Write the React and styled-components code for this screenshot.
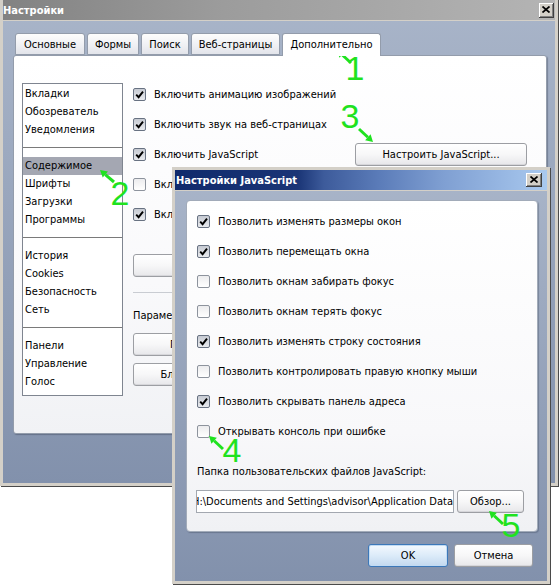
import React from "react";
import styled, { createGlobalStyle } from "styled-components";

const UI_FONT = `"DejaVu Sans Condensed", "Liberation Sans", Arial, sans-serif`;

const GlobalStyle = createGlobalStyle`
  html, body { margin: 0; padding: 0; background: #ffffff; }
  body { font-family: ${UI_FONT}; font-size: 11px; color: #000; }
  * { box-sizing: border-box; }
`;

const Desktop = styled.div`
  position: relative;
  width: 560px;
  height: 585px;
  overflow: hidden;
  background: #fff;
`;

const Window = styled.div`
  position: absolute;
  left: ${(p) => p.$x}px;
  top: ${(p) => p.$y}px;
  width: ${(p) => p.$w}px;
  height: ${(p) => p.$h}px;
  display: flex;
  flex-direction: column;
  border: 3px solid #d4d0c8;
  box-shadow: 1px 1px 0 #4a4a4a;
  background: linear-gradient(#a9b5c9, #8291ac);
`;

const TitleBar = styled.div`
  height: 21px;
  flex: none;
  display: flex;
  align-items: center;
  justify-content: space-between;
  padding: 0 ${(p) => p.$padR}px 0 ${(p) => p.$padL}px;
  border-bottom: 1px solid #d4d0c8;
  background: ${(p) =>
    p.$active
      ? "linear-gradient(90deg, #102a6c 0%, #1a3576 33%, #3d5b9b 40%, #5b7cb9 55%, #7f9fd2 72%, #a9c9ef 100%)"
      : "linear-gradient(90deg, #828282 0%, #9c9c9c 40%, #b4b4b4 100%)"};
`;

const TitleText = styled.span`
  color: #fff;
  font-weight: bold;
  font-size: 11px;
  white-space: nowrap;
`;

const CloseButton = styled.div`
  width: ${(p) => p.$w}px;
  height: ${(p) => p.$h}px;
  flex: none;
  background: #d4d0c8;
  box-shadow: inset -1px -1px 0 #404040, inset 1px 1px 0 #ffffff,
    inset -2px -2px 0 #808080;
  display: flex;
  align-items: center;
  justify-content: center;
  padding: 0 1px 1px 0;
`;

const WindowBody = styled.div`
  flex: 1;
  display: flex;
  flex-direction: column;
  padding: ${(p) => p.$pad};
`;

/* ---------- tabs ---------- */

const TabStrip = styled.div`
  display: flex;
  gap: 2px;
  padding-left: 2px;
  height: 22px;
  margin-top: 12px;
  position: relative;
  z-index: 1;
`;

const Tab = styled.div`
  width: ${(p) => p.$w}px;
  height: ${(p) => (p.$active ? 23 : 22)}px;
  border: 1px solid #939cab;
  border-bottom: ${(p) => (p.$active ? "none" : "1px solid #939cab")};
  border-radius: 3px 3px 0 0;
  background: ${(p) =>
    p.$active ? "#ffffff" : "linear-gradient(#fdfdfd, #eeeff3 60%, #e2e4ea)"};
  display: flex;
  align-items: center;
  justify-content: center;
  white-space: nowrap;
  padding-bottom: ${(p) => (p.$active ? 1 : 0)}px;
`;

const TabPanel = styled.div`
  width: 534px;
  height: 379px;
  border: 1px solid #939cab;
  border-radius: 3px;
  background: linear-gradient(#ffffff, #f9f9fb 60%, #f1f2f5);
  box-shadow: 1px 1px 1px rgba(40, 50, 70, 0.35);
  display: flex;
  align-items: flex-start;
  padding: 27px 19px 0 8px;
`;

/* ---------- category list ---------- */

const CategoryList = styled.div`
  width: 101px;
  height: 313px;
  flex: none;
  border: 1px solid #7f8590;
  background: #ffffff;
  padding: 1px 0;
  display: flex;
  flex-direction: column;
`;

const CategoryItem = styled.div`
  height: 18px;
  line-height: 18px;
  padding-left: 2px;
  white-space: nowrap;
  background: ${(p) => (p.$selected ? "#a4a7b2" : "transparent")};
`;

const ListSeparator = styled.div`
  height: 1px;
  background: #7a7a7a;
  margin: 8px 0 9px;
`;

/* ---------- options ---------- */

const OptionsColumn = styled.div`
  flex: 1;
  margin-left: 10px;
  margin-top: -4px;
  display: flex;
  flex-direction: column;
  align-items: stretch;
`;

const OptionRow = styled.div`
  height: 30px;
  flex: none;
  display: flex;
  align-items: center;
  gap: 8px;
  white-space: nowrap;
`;

const OptionLabel = styled.span`
  flex: 1;
`;

const Box = styled.span`
  width: 13px;
  height: 13px;
  flex: none;
  border: 1px solid ${(p) => (p.$checked ? "#687282" : "#8d939d")};
  border-radius: 2px;
  background: ${(p) =>
    p.$checked
      ? "linear-gradient(#c6cad2, #e8eaee)"
      : "linear-gradient(#ececee, #ffffff)"};
  display: flex;
  align-items: center;
  justify-content: center;
`;

const Button = styled.button`
  font: inherit;
  color: #000;
  flex: none;
  height: 23px;
  width: ${(p) => p.$w}px;
  padding: 0;
  border: 1px solid ${(p) => (p.$primary ? "#3c78b9" : "#9c9ea3")};
  border-radius: 3px;
  white-space: nowrap;
  overflow: hidden;
  background: ${(p) =>
    p.$primary
      ? "linear-gradient(#f4f9fe, #dcebf9 50%, #c3d9ef)"
      : "linear-gradient(#ffffff, #f7f7f8 50%, #e7e7ea)"};
  box-shadow: ${(p) =>
    p.$primary ? "inset 0 0 0 1px #c2dbf3" : "inset 0 -1px 0 #d6d6da"};
`;

const BlockButton = styled(Button)`
  margin-top: ${(p) => p.$mt}px;
`;

const Divider = styled.div`
  height: 1px;
  background: #c9ccd2;
  margin-top: ${(p) => p.$mt}px;
`;

const SectionLabel = styled.div`
  height: 16px;
  line-height: 16px;
  margin-top: ${(p) => p.$mt}px;
  white-space: nowrap;
`;

/* ---------- dialog ---------- */

const DialogPanel = styled.div`
  width: 352px;
  height: 332px;
  flex: none;
  border: 1px solid #a2abb9;
  border-radius: 4px;
  background: linear-gradient(#ffffff, #f8f8fa 70%, #f0f1f4);
  box-shadow: 1px 1px 1px rgba(40, 50, 70, 0.3);
  display: flex;
  flex-direction: column;
  padding: 5px 0 0 10px;
`;

const PathRow = styled.div`
  display: flex;
  margin-top: 10px;
  margin-left: -1px;
  gap: 3px;
`;

const PathField = styled.div`
  width: 258px;
  height: 23px;
  border: 1px solid #a3a8b0;
  background: #ffffff;
  display: flex;
  align-items: center;
  justify-content: flex-end;
  overflow: hidden;
  white-space: nowrap;
  padding: 0;
`;

const ButtonRow = styled.div`
  display: flex;
  justify-content: flex-end;
  gap: 6px;
  margin-top: 12px;
  padding-right: 4px;
`;

const Annotations = styled.svg`
  position: absolute;
  left: 0;
  top: 0;
  pointer-events: none;
`;

/* ---------- helpers ---------- */

const CheckMark = () => (
  <svg width="9" height="9" viewBox="0 0 9 9">
    <path d="M1.2 4.6 L3.6 7.2 L8 1.6" fill="none" stroke="#000" strokeWidth="1.9" />
  </svg>
);

const Check = ({ checked }) => <Box $checked={checked}>{checked && <CheckMark />}</Box>;

const CloseGlyph = () => (
  <svg width="8" height="7" viewBox="0 0 8 7">
    <path d="M0.5 0.5 L7.5 6.5 M7.5 0.5 L0.5 6.5" stroke="#000" strokeWidth="1.7" />
  </svg>
);

const Option = ({ checked, children, extra }) => (
  <OptionRow>
    <Check checked={checked} />
    <OptionLabel>{children}</OptionLabel>
    {extra}
  </OptionRow>
);

const GREEN = "#1fe21f";

const Arrow = ({ from, to }) => {
  const [x1, y1] = from;
  const [x2, y2] = to;
  const dx = x2 - x1;
  const dy = y2 - y1;
  const len = Math.hypot(dx, dy);
  const ux = dx / len;
  const uy = dy / len;
  const bx = x2 - ux * 7;
  const by = y2 - uy * 7;
  const nx = -uy * 4;
  const ny = ux * 4;
  return (
    <g>
      <line x1={x1} y1={y1} x2={bx} y2={by} stroke={GREEN} strokeWidth="3" />
      <polygon
        points={`${x2},${y2} ${bx + nx},${by + ny} ${bx - nx},${by - ny}`}
        fill={GREEN}
      />
    </g>
  );
};

const marks = [
  { n: "1", x: 355, y: 80, from: [351, 63], to: [337, 50] },
  { n: "2", x: 120, y: 205, from: [114, 182], to: [100, 170] },
  { n: "3", x: 350, y: 128, from: [359, 129], to: [373, 142] },
  { n: "4", x: 232, y: 462, from: [223, 449], to: [209, 436] },
  { n: "5", x: 511, y: 537, from: [503, 524], to: [489, 511] },
];

const categories = [
  ["Вкладки", "Обозреватель", "Уведомления"],
  ["Содержимое", "Шрифты", "Загрузки", "Программы"],
  ["История", "Cookies", "Безопасность", "Сеть"],
  ["Панели", "Управление", "Голос"],
];

const tabs = [
  ["Основные", 70],
  ["Формы", 52],
  ["Поиск", 48],
  ["Веб-страницы", 89],
  ["Дополнительно", 99, true],
];

const jsOptions = [
  ["Позволить изменять размеры окон", true],
  ["Позволить перемещать окна", true],
  ["Позволить окнам забирать фокус", false],
  ["Позволить окнам терять фокус", false],
  ["Позволить изменять строку состояния", true],
  ["Позволить контролировать правую кнопку мыши", false],
  ["Позволить скрывать панель адреса", true],
  ["Открывать консоль при ошибке", false],
];

export default function App() {
  return (
    <>
      <GlobalStyle />
      <Desktop>
        <Window $x={0} $y={-3} $w={558} $h={489}>
          <TitleBar $padL={0} $padR={1}>
            <TitleText>Настройки</TitleText>
            <CloseButton $w={15} $h={15}>
              <CloseGlyph />
            </CloseButton>
          </TitleBar>
          <WindowBody $pad="0 0 0 10px">
            <TabStrip>
              {tabs.map(([label, w, active]) => (
                <Tab key={label} $w={w} $active={active}>
                  {label}
                </Tab>
              ))}
            </TabStrip>
            <TabPanel>
              <CategoryList>
                {categories.map((group, gi) => (
                  <React.Fragment key={gi}>
                    {gi > 0 && <ListSeparator />}
                    {group.map((item) => (
                      <CategoryItem key={item} $selected={item === "Содержимое"}>
                        {item}
                      </CategoryItem>
                    ))}
                  </React.Fragment>
                ))}
              </CategoryList>
              <OptionsColumn>
                <Option checked>Включить анимацию изображений</Option>
                <Option checked>Включить звук на веб-страницах</Option>
                <Option checked extra={<Button $w={172}>Настроить JavaScript...</Button>}>
                  Включить JavaScript
                </Option>
                <Option checked={false}>Включить Java</Option>
                <Option checked>Включить плагины</Option>
                <BlockButton $w={272} $mt={25}>
                  Управление настройками сайтов...
                </BlockButton>
                <Divider $mt={15} />
                <SectionLabel $mt={15}>Параметры стиля</SectionLabel>
                <BlockButton $w={226} $mt={9}>
                  Параметры представления...
                </BlockButton>
                <BlockButton $w={214} $mt={7}>
                  Блокированное содержимое...
                </BlockButton>
              </OptionsColumn>
            </TabPanel>
          </WindowBody>
        </Window>

        <Window $x={172} $y={167} $w={378} $h={417}>
          <TitleBar $active $padL={1} $padR={5}>
            <TitleText>Настройки JavaScript</TitleText>
            <CloseButton $w={16} $h={14}>
              <CloseGlyph />
            </CloseButton>
          </TitleBar>
          <WindowBody $pad="9px 10px 0 11px">
            <DialogPanel>
              {jsOptions.map(([label, checked]) => (
                <Option key={label} checked={checked}>
                  {label}
                </Option>
              ))}
              <SectionLabel $mt={18}>Папка пользовательских файлов JavaScript:</SectionLabel>
              <PathRow>
                <PathField>
                  <span>H:\Documents and Settings\advisor\Application Data</span>
                </PathField>
                <Button $w={67}>Обзор...</Button>
              </PathRow>
            </DialogPanel>
            <ButtonRow>
              <Button $w={80} $primary>
                OK
              </Button>
              <Button $w={79}>Отмена</Button>
            </ButtonRow>
          </WindowBody>
        </Window>

        <Annotations width="560" height="585" viewBox="0 0 560 585">
          {marks.map((m) => (
            <g key={m.n}>
              <Arrow from={m.from} to={m.to} />
              <text
                x={m.x}
                y={m.y}
                fill={GREEN}
                fontSize="34"
                textAnchor="middle"
                fontFamily="'Liberation Sans', Arial, sans-serif"
              >
                {m.n}
              </text>
            </g>
          ))}
        </Annotations>
      </Desktop>
    </>
  );
}
